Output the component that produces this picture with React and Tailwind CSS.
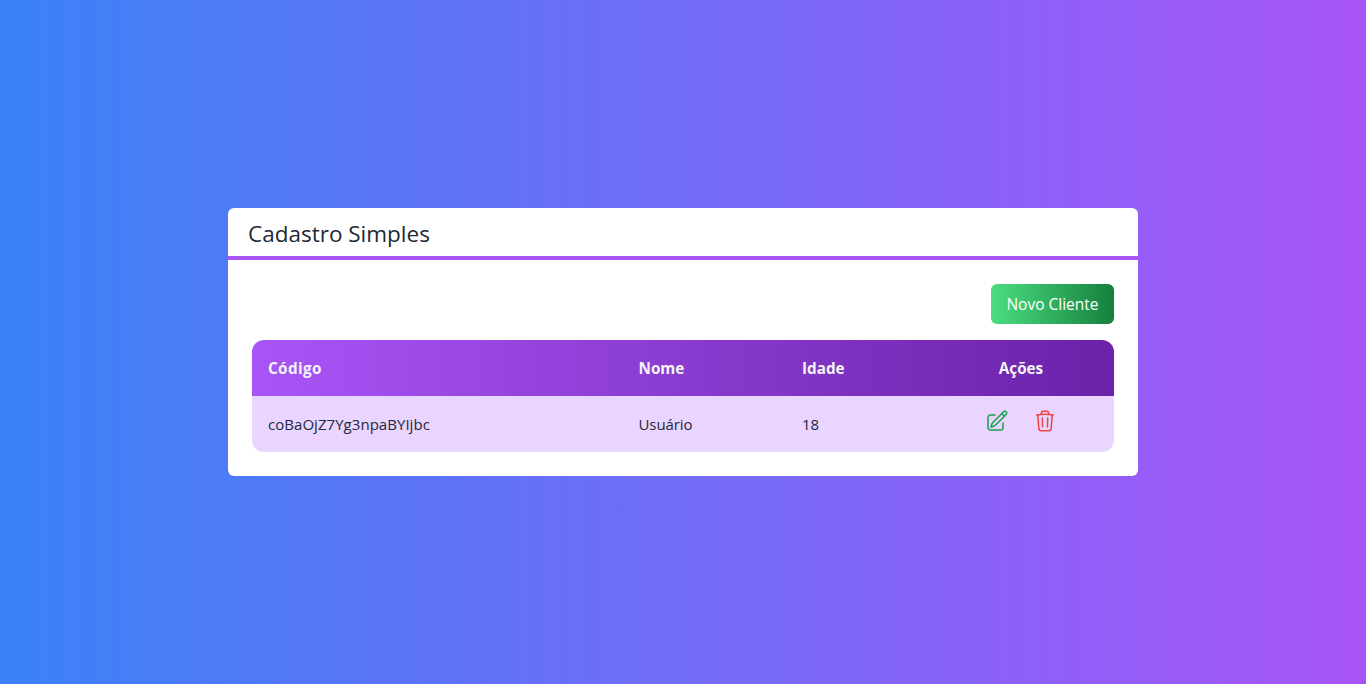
function EditIcon() {
  return (
    <svg className="h-6 w-6" fill="none" viewBox="0 0 24 24" stroke="currentColor" strokeWidth="1.5" strokeLinecap="round" strokeLinejoin="round">
      <path d="M16.862 4.487l1.687-1.688a1.875 1.875 0 112.652 2.652L10.582 16.07a4.5 4.5 0 01-1.897 1.13L6 18l.8-2.685a4.5 4.5 0 011.13-1.897l8.932-8.931zm0 0L19.5 7.125M18 14v4.75A2.25 2.25 0 0115.75 21H5.25A2.25 2.25 0 013 18.75V8.25A2.25 2.25 0 015.25 6H10" />
    </svg>
  );
}

function TrashIcon() {
  return (
    <svg className="h-6 w-6" fill="none" viewBox="0 0 24 24" stroke="currentColor" strokeWidth="1.5" strokeLinecap="round" strokeLinejoin="round">
      <path d="M14.74 9l-.346 9m-4.788 0L9.26 9m9.968-3.21c.342.052.682.107 1.022.166m-1.022-.165L18.16 19.673a2.25 2.25 0 01-2.244 2.077H8.084a2.25 2.25 0 01-2.244-2.077L4.772 5.79m14.456 0a48.108 48.108 0 00-3.478-.397m-12 .562c.34-.059.68-.114 1.022-.165m0 0a48.11 48.11 0 013.478-.397m7.5 0v-.916c0-1.18-.91-2.164-2.09-2.201a51.964 51.964 0 00-3.32 0c-1.18.037-2.09 1.022-2.09 2.201v.916m7.5 0a48.667 48.667 0 00-7.5 0" />
    </svg>
  );
}

const columns = "grid h-14 grid-cols-[370.5px_163.5px_144px_182px] items-center";

export default function App() {
  return (
    <div className="flex h-screen items-center justify-center bg-linear-to-r/srgb from-[#3b82f6] to-[#a855f7] font-['Open_Sans','Noto_Sans',sans-serif] text-white">
      <div className="flex w-[910px] flex-col rounded-md bg-white text-[#1f2937]">
        <div className="flex flex-col">
          <h1 className="px-5 pt-[10px] pb-[6px] text-[22.5px] leading-8">Cadastro Simples</h1>
          <hr className="border-2 border-[#a855f7]" />
        </div>
        <div className="flex flex-col p-6">
          <div className="flex justify-end">
            <button className="mb-4 h-10 w-[123px] rounded-md bg-linear-to-r/srgb from-[#4ade80] to-[#15803d] pt-px text-[15.5px] whitespace-nowrap text-white">Novo Cliente</button>
          </div>
          <div className="overflow-hidden rounded-xl">
            <div className="bg-linear-to-r/srgb from-[#a855f7] to-[#6b21a8] text-[15.25px] font-bold text-gray-100">
              <div className={columns}>
                <span className="pt-px pl-4 tracking-[0.4px]">Código</span>
                <span className="pt-px pl-4">Nome</span>
                <span className="pt-px pl-4">Idade</span>
                <span className="pt-px text-center">Ações</span>
              </div>
            </div>
            <div className="bg-[#e9d5ff] text-[15px]">
              <div className={columns}>
                <span className="pt-px pl-4 tracking-[0.04px]">coBaOjZ7Yg3npaBYIjbc</span>
                <span className="pt-px pl-4 tracking-[-0.1px]">Usuário</span>
                <span className="pt-px pl-4">18</span>
                <div className="flex h-14 justify-center pt-px">
                  <button className="m-1 h-10 p-2 text-[#16a34a]"><EditIcon /></button>
                  <button className="m-1 h-10 p-2 text-[#ef4444]"><TrashIcon /></button>
                </div>
              </div>
            </div>
          </div>
        </div>
      </div>
    </div>
  );
}
